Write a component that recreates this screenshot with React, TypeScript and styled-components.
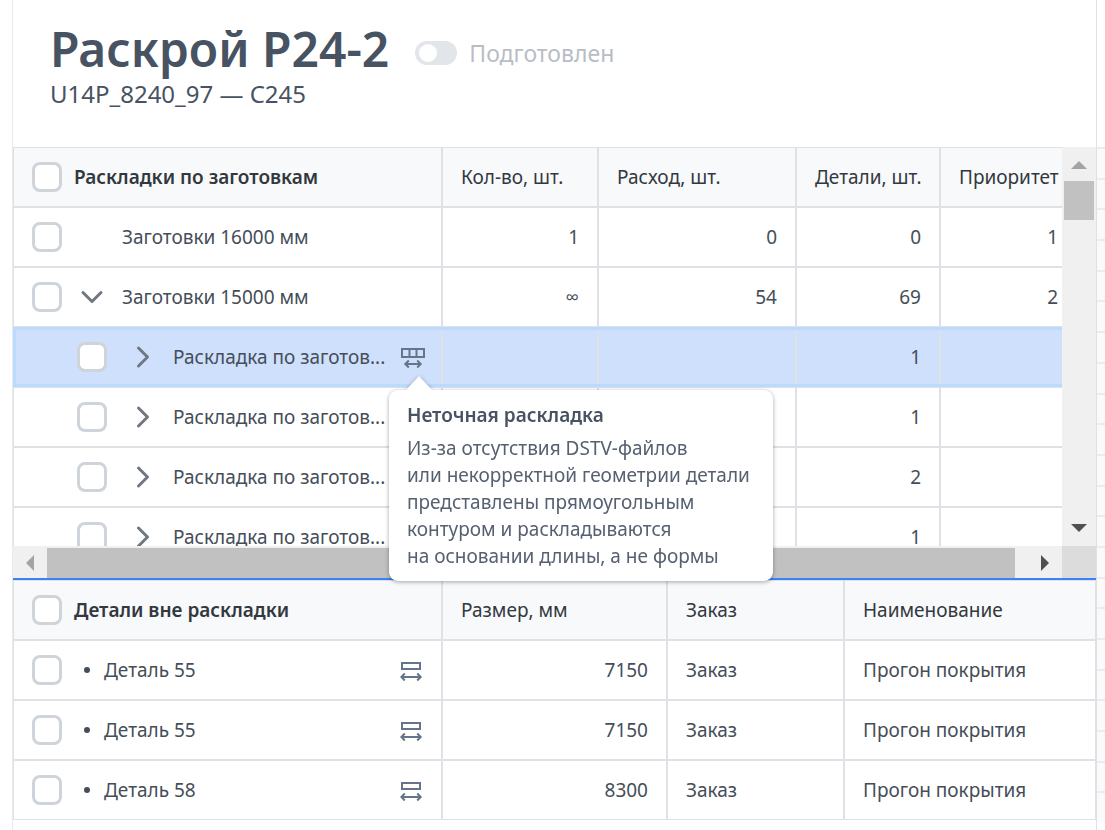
import React from "react";
import styled, { createGlobalStyle, css } from "styled-components";

const line = "#dee1e6";

const GlobalStyle = createGlobalStyle`
  * { box-sizing: border-box; }
  body {
    margin: 0;
    background: #fff;
    color: #454e58;
    font-family: "Noto Sans", "Open Sans", sans-serif;
    font-size: 19px;
    line-height: 27px;
  }
  button { border: 0; padding: 0; background: none; font: inherit; color: inherit; cursor: pointer; }
`;

const Page = styled.div`
  display: grid;
  grid-template-columns: minmax(0, 1fr) 8px;
  min-height: 100vh;
  padding-left: 12px;
`;

const Main = styled.main`
  border-left: 1px solid #e8eaed;
  border-right: 1px solid ${line};
`;

const Header = styled.header`
  padding: 19px 37px 38px;
  color: #475362;
`;

const TitleRow = styled.div`
  display: flex;
  align-items: center;
  gap: 26px;
`;

const Title = styled.h1`
  margin: 0;
  font-size: 48px;
  line-height: 60px;
  font-weight: 600;
  white-space: nowrap;
`;

const Subtitle = styled.p`
  margin: 0;
  font-size: 24px;
  line-height: 30px;
`;

const SwitchLabel = styled.label`
  display: flex;
  align-items: center;
  gap: 12px;
  padding-top: 8px;
  font-size: 23px;
  line-height: 30px;
  color: #b8bdc5;
`;

const Switch = styled.input`
  appearance: none;
  display: flex;
  align-items: center;
  width: 42px;
  height: 24px;
  margin: 0;
  padding: 0 4px;
  border-radius: 12px;
  background: #e2e6ea;
  &::before {
    content: "";
    width: 18px;
    height: 18px;
    border-radius: 50%;
    background: #fff;
  }
  &:checked { justify-content: flex-end; background: #3b82f6; }
`;

const UpperPane = styled.section`
  position: relative;
  display: grid;
  grid-template-columns: minmax(0, 1fr) 34px;
  grid-template-rows: 399px 32px;
  border-bottom: 2px solid #3b82f6;
`;

const Viewport = styled.div`
  overflow: hidden;
`;

/* The outer half of the collapsed border is clipped by the pane. */
const Table = styled.table<{ $width?: number }>`
  width: calc(100% + 2px);
  min-width: ${(p) => (p.$width ? `${p.$width}px` : "0")};
  margin: -1px;
  table-layout: fixed;
  border-collapse: collapse;
`;

const Col = styled.col<{ $width?: number }>`
  width: ${(p) => (p.$width ? `${p.$width}px` : "auto")};
`;

const cell = css`
  height: 60px;
  padding: 0 18px;
  border: 2px solid ${line};
  white-space: nowrap;
`;

const Th = styled.th`
  ${cell}
  background: #f8f9fb;
  color: #32383e;
  font-weight: 400;
  text-align: left;
`;

const Td = styled.td<{ $numeric?: boolean }>`
  ${cell}
  text-align: ${(p) => (p.$numeric ? "right" : "left")};
`;

const Row = styled.tr<{ $selected?: boolean }>`
  ${(p) =>
    p.$selected &&
    css`
      background: #cfe0fd;
      outline: 3px solid #bbdaff;
      outline-offset: -3px;
    `}
`;

const NameCell = styled.div<{ $indent?: number; $gap: number }>`
  display: flex;
  align-items: center;
  gap: ${(p) => p.$gap}px;
  padding-left: ${(p) => p.$indent ?? 0}px;
`;

const Heading = styled.span`
  font-weight: 600;
`;

const Checkbox = styled.input`
  appearance: none;
  flex: none;
  width: 30px;
  height: 30px;
  margin: 0;
  border: 3px solid #ced4da;
  border-radius: 8px;
  background: #fff;
  &:checked { background: #3b82f6; }
`;

const Toggle = styled.button<{ $child?: boolean }>`
  display: flex;
  flex: none;
  width: 20px;
  height: 24px;
  align-items: center;
  justify-content: center;
  margin: ${(p) => (p.$child ? "0 4px 0 10px" : "0")};
  color: #6f7780;
`;

const Spacer = styled.span`
  width: 20px;
`;

const Bullet = styled.span`
  width: 6px;
  height: 6px;
  margin: 0 2px 0 10px;
  border-radius: 50%;
  background: #454e58;
`;

const EndIcon = styled.span<{ $inset: number }>`
  display: flex;
  flex: none;
  width: 24px;
  margin-left: auto;
  margin-right: ${(p) => p.$inset}px;
  color: #64748b;
`;

const VScroll = styled.div`
  display: flex;
  flex-direction: column;
  background: #f0f0f0;
`;

const HScroll = styled.div`
  display: flex;
  background: #f0f0f0;
`;

const Track = styled.div<{ $vertical?: boolean }>`
  flex: 1;
  padding: ${(p) => (p.$vertical ? "0 2px" : "2px 13px 0 0")};
`;

const Thumb = styled.div<{ $vertical?: boolean }>`
  height: ${(p) => (p.$vertical ? "39px" : "100%")};
  background: #c1c1c1;
`;

const ScrollButton = styled.button<{ $active?: boolean }>`
  display: flex;
  align-items: center;
  justify-content: center;
  width: 34px;
  height: 34px;
  color: ${(p) => (p.$active ? "#505050" : "#a3a3a3")};
`;

const Corner = styled.div`
  background: #dcdcdc;
`;

const Tooltip = styled.div`
  position: absolute;
  left: 376px;
  top: 243px;
  width: 384px;
  padding: 12px 18px 11px;
  border-radius: 9px;
  background: #fff;
  color: #566070;
  white-space: nowrap;
  filter: drop-shadow(0 1px 2px rgba(0, 0, 0, 0.35));
  &::before {
    content: "";
    position: absolute;
    left: 17px;
    bottom: 100%;
    border: solid transparent;
    border-width: 0 13px 14px;
    border-bottom-color: #fff;
  }
`;

const TooltipTitle = styled.h2`
  margin: 0 0 6px;
  color: #475362;
  font-size: 19px;
  line-height: 27px;
  font-weight: 600;
`;

const TooltipText = styled.p`
  margin: 0;
`;

const LowerPane = styled.section`
  overflow: hidden;
`;

const Strip = styled.aside`
  display: flex;
  flex-direction: column;
  padding: 147px 0 8px;
`;

const StripRow = styled.div`
  flex: 1;
  border-top: 2px solid #eaecef;
  background: #fafafb;
`;

const Chevron = ({ down }: { down?: boolean }) => (
  <svg width="24" height="24" viewBox="0 0 24 24" fill="none" stroke="currentColor" strokeWidth="3" strokeLinecap="round" strokeLinejoin="round" style={{ flex: "none" }}>
    <path d={down ? "M3 7.5l9 9 9-9" : "M7.5 3l9 9-9 9"} />
  </svg>
);

const LayoutIcon = () => (
  <svg width="24" height="22" viewBox="0 0 24 22" fill="none" stroke="currentColor" strokeWidth="2">
    <path d="M1 3h22v8H1zM8.500 3v8M15.500 3v8" />
    <path d="M4.500 18h15M7.800 14.500L4.300 18l3.500 3.500M16.200 14.500l3.500 3.500-3.500 3.500" />
  </svg>
);

const DetailIcon = () => (
  <svg width="24" height="22" viewBox="0 0 24 22" fill="none" stroke="currentColor" strokeWidth="2">
    <path d="M2 4h18v6H2z" />
    <path d="M1.500 18h19M4.800 14.500L1.300 18l3.500 3.500M17.200 14.500l3.500 3.500-3.500 3.500" />
  </svg>
);

const Arrow = ({ points, label, active }: { points: string; label: string; active?: boolean }) => (
  <ScrollButton aria-label={label} $active={active}>
    <svg width="16" height="16" viewBox="0 0 16 16" fill="currentColor">
      <polygon points={points} />
    </svg>
  </ScrollButton>
);

const blanks = [
  { name: "Заготовки 16000 мм", values: ["1", "0", "0", "1"] },
  { name: "Заготовки 15000 мм", values: ["∞", "54", "69", "2"], open: true },
];

const layouts = [
  { parts: "1", selected: true },
  { parts: "1" },
  { parts: "2" },
  { parts: "1" },
];

const details = [
  { name: "Деталь 55", size: "7150" },
  { name: "Деталь 55", size: "7150" },
  { name: "Деталь 58", size: "8300" },
];

export default function App() {
  return (
    <>
      <GlobalStyle />
      <Page>
        <Main>
          <Header>
            <TitleRow>
              <Title>Раскрой P24-2</Title>
              <SwitchLabel>
                <Switch type="checkbox" role="switch" />
                Подготовлен
              </SwitchLabel>
            </TitleRow>
            <Subtitle>U14P_8240_97 — C245</Subtitle>
          </Header>

          <UpperPane>
            <Viewport>
              <Table $width={1066}>
                <colgroup>
                  <Col $width={429} />
                  <Col $width={156} />
                  <Col $width={198} />
                  <Col $width={144} />
                  <Col />
                </colgroup>
                <thead>
                  <tr>
                    <Th>
                      <NameCell $gap={12}>
                        <Checkbox type="checkbox" aria-label="Выбрать все раскладки" />
                        <Heading>Раскладки по заготовкам</Heading>
                      </NameCell>
                    </Th>
                    <Th>Кол-во, шт.</Th>
                    <Th>Расход, шт.</Th>
                    <Th>Детали, шт.</Th>
                    <Th>Приоритет</Th>
                  </tr>
                </thead>
                <tbody>
                  {blanks.map((b) => (
                    <Row key={b.name}>
                      <Td>
                        <NameCell $gap={20}>
                          <Checkbox type="checkbox" aria-label={b.name} />
                          {b.open ? (
                            <Toggle aria-label="Свернуть" aria-expanded>
                              <Chevron down />
                            </Toggle>
                          ) : (
                            <Spacer />
                          )}
                          {b.name}
                        </NameCell>
                      </Td>
                      {b.values.map((v, i) => (
                        <Td key={i} $numeric>{v}</Td>
                      ))}
                    </Row>
                  ))}
                  {layouts.map((l, i) => (
                    <Row key={i} $selected={l.selected}>
                      <Td>
                        <NameCell $gap={16} $indent={45}>
                          <Checkbox type="checkbox" aria-label="Раскладка по заготовке" />
                          <Toggle $child aria-label="Развернуть" aria-expanded={false}>
                            <Chevron />
                          </Toggle>
                          Раскладка по заготов...
                          {l.selected && (
                            <EndIcon $inset={0}>
                              <LayoutIcon />
                            </EndIcon>
                          )}
                        </NameCell>
                      </Td>
                      <Td />
                      <Td />
                      <Td $numeric>{l.parts}</Td>
                      <Td />
                    </Row>
                  ))}
                </tbody>
              </Table>
            </Viewport>
            <VScroll>
              <Arrow points="0,13 8,5 16,13" label="Вверх" />
              <Track $vertical>
                <Thumb $vertical />
              </Track>
              <Arrow points="0,3 16,3 8,11" label="Вниз" active />
            </VScroll>
            <HScroll>
              <Arrow points="12,0 12,16 4,8" label="Влево" />
              <Track>
                <Thumb />
              </Track>
              <Arrow points="4,0 12,8 4,16" label="Вправо" active />
            </HScroll>
            <Corner />
            <Tooltip role="tooltip">
              <TooltipTitle>Неточная раскладка</TooltipTitle>
              <TooltipText>
                Из-за отсутствия DSTV-файлов
                <br />
                или некорректной геометрии детали
                <br />
                представлены прямоугольным
                <br />
                контуром и раскладываются
                <br />
                на основании длины, а не формы
              </TooltipText>
            </Tooltip>
          </UpperPane>

          <LowerPane>
            <Table>
              <colgroup>
                <Col $width={429} />
                <Col $width={225} />
                <Col $width={177} />
                <Col />
              </colgroup>
              <thead>
                <tr>
                  <Th>
                    <NameCell $gap={12}>
                      <Checkbox type="checkbox" aria-label="Выбрать все детали" />
                      <Heading>Детали вне раскладки</Heading>
                    </NameCell>
                  </Th>
                  <Th>Размер, мм</Th>
                  <Th>Заказ</Th>
                  <Th>Наименование</Th>
                </tr>
              </thead>
              <tbody>
                {details.map((d, i) => (
                  <Row key={i}>
                    <Td>
                      <NameCell $gap={12}>
                        <Checkbox type="checkbox" aria-label={d.name} />
                        <Bullet />
                        {d.name}
                        <EndIcon $inset={-1}>
                          <DetailIcon />
                        </EndIcon>
                      </NameCell>
                    </Td>
                    <Td $numeric>{d.size}</Td>
                    <Td>Заказ</Td>
                    <Td>Прогон покрытия</Td>
                  </Row>
                ))}
              </tbody>
            </Table>
          </LowerPane>
        </Main>
        <Strip>
          {Array.from({ length: 22 }, (_, i) => (
            <StripRow key={i} />
          ))}
        </Strip>
      </Page>
    </>
  );
}
